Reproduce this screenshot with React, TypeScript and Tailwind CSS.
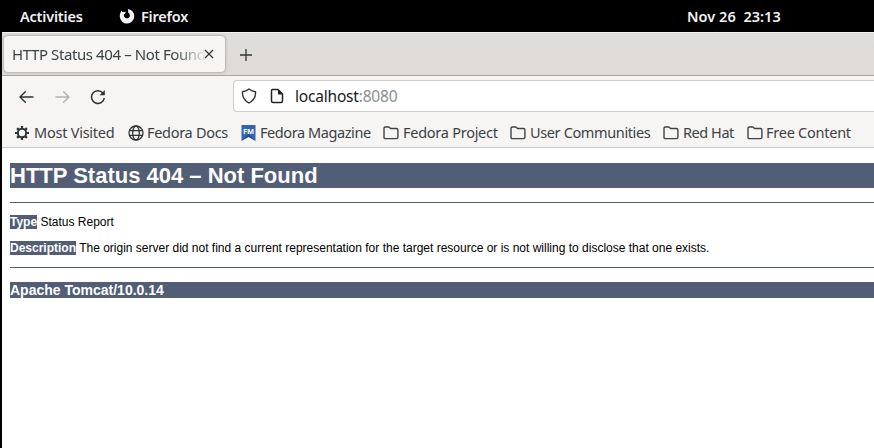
import type { ReactNode } from "react";

function Folder() {
  return (
    <svg className="h-4 w-4 shrink-0" viewBox="0 0 16 16" fill="none" stroke="#3c4446" strokeWidth="1.4" strokeLinejoin="round">
      <path d="M1 12.2V3.3Q1 2 2.3 2h3.2q.6 0 1 .5l1 1h6q1.4 0 1.4 1.4v7.3q0 1.4-1.4 1.4H2.4Q1 13.6 1 12.2Z" />
    </svg>
  );
}

function Gear() {
  return (
    <svg className="h-4 w-4 shrink-0" viewBox="0 0 16 16" fill="none" stroke="#2e3436">
      <circle cx="8" cy="8" r="4.2" strokeWidth="2" />
      <path strokeWidth="2.2" d="M8 1v3M8 12v3M1 8h3M12 8h3M3.1 3.1l2 2M10.9 10.9l2 2M12.9 3.1l-2 2M5.1 10.9l-2 2" />
    </svg>
  );
}

function Globe() {
  return (
    <svg className="h-4 w-4 shrink-0" viewBox="0 0 16 16" fill="none" stroke="#2e3436" strokeWidth="1.3">
      <circle cx="8" cy="8" r="7" />
      <ellipse cx="8" cy="8" rx="3.3" ry="7" />
      <path d="M1.7 5.6h12.6M1.7 10.4h12.6" />
    </svg>
  );
}

function Magazine() {
  return (
    <div className="relative h-4 w-[15px] shrink-0">
      <svg className="block h-4 w-[15px]" viewBox="0 0 15 16">
        <path d="M.5 0h14v16L7.5 11 .5 16Z" fill="#3465b0" />
        <path d="M.5 16 7.5 9l7 7-7-4Z" fill="#254a85" />
      </svg>
      <span className="absolute inset-x-0 top-[2px] text-center text-[7.5px] font-bold leading-[8px] tracking-normal text-white">FM</span>
    </div>
  );
}

function Bookmark({ icon, label, className }: { icon: ReactNode; label: string; className: string }) {
  return (
    <div className={`flex shrink-0 items-center whitespace-nowrap ${className}`}>
      {icon}
      <span>{label}</span>
    </div>
  );
}

export default function App() {
  return (
    <div className="flex h-[448px] w-[874px] flex-col overflow-hidden bg-black font-['Noto_Sans','Open_Sans',sans-serif] text-[#3b4244]">
      <header className="flex h-8 shrink-0 items-center pb-px pl-5 text-[14.5px] font-semibold leading-5 text-[#f2f2f2]">
        <span className="w-[99px] tracking-[-0.2px]">Activities</span>
        <svg className="mr-[6px] h-4 w-4" viewBox="0 0 16 16">
          <path fill="#f2f2f2" d="M2.3 2.4 3.5 4 6.8 3.8 6 5.7 4.8 6.6Q4.7 9.7 7.4 10.3 10.8 10.5 10.9 7.5 10.9 5.5 9.2 4.5L9 1q6.2 1.4 6.2 7.2A7.2 7.2 0 0 1 .8 8.6Q.7 5.7 1.7 4.2Z" />
        </svg>
        <span className="w-[546px] tracking-[-0.2px]">Firefox</span>
        <span className="whitespace-pre tracking-[0.05px]">Nov 26  23:13</span>
      </header>
      <div className="ml-[2px] flex min-h-0 flex-1 flex-col bg-white">
        <div className="flex h-11 shrink-0 items-center border-b border-t border-b-[#aaa5a1] border-t-[#f3f2f1] bg-linear-to-b from-[#dfdedc] to-[#dedad7]">
          <div className="ml-[2px] flex h-9 w-[221px] items-center rounded-[4px] bg-[#f6f5f4] pl-2 shadow-[0_0_3px_#8a8580]">
            <span className="w-[193px] overflow-hidden whitespace-nowrap text-[15px] tracking-[-0.4px] [mask-image:linear-gradient(to_right,#000_84%,transparent_101%)]">HTTP Status 404 – Not Found</span>
            <svg className="-ml-px h-[10px] w-[10px]" viewBox="0 0 10 10" stroke="#2e3436" strokeWidth="1.2"><path d="m1 1 8 8M9 1 1 9" /></svg>
          </div>
          <svg className="ml-[15px] mt-px h-3 w-3" viewBox="0 0 12 12" stroke="#2e3436" strokeWidth="1.3"><path d="M6 0v12M0 6h12" /></svg>
        </div>
        <div className="flex h-[72px] shrink-0 flex-col border-b border-[#ccc9c7] bg-[#f6f5f4] pt-1">
          <div className="flex h-8 items-center">
            <svg className="ml-[17px] mt-px h-4 w-[15px]" viewBox="0 0 15 16" fill="none" stroke="#2e3436" strokeWidth="1.4" strokeLinecap="round" strokeLinejoin="round"><path d="M14 8H1m5.3-5.3L1 8l5.3 5.3" /></svg>
            <svg className="ml-[21px] mt-px h-4 w-[15px]" viewBox="0 0 15 16" fill="none" stroke="#b2b3b2" strokeWidth="1.4" strokeLinecap="round" strokeLinejoin="round"><path d="M1 8h13M8.7 2.7 14 8l-5.3 5.3" /></svg>
            <svg className="ml-5 mt-px h-4 w-4" viewBox="0 0 16 16" fill="none" stroke="#2e3436" strokeWidth="1.5"><path d="M12.9 4A6.4 6.4 0 1 0 14.3 9" /><path d="M14.8 1v5.2H9.5Z" fill="#2e3436" stroke="none" /></svg>
            <div className="ml-[127px] flex h-8 flex-1 items-center rounded-l-[4px] border border-r-0 border-[#d0ccc9] bg-white text-[15.5px]">
              <svg className="ml-[7px] h-4 w-4" viewBox="0 0 16 16" fill="none" stroke="#2e3436" strokeWidth="1.4" strokeLinejoin="round"><path d="M8 1Q11 3.2 14.5 3.8 15.1 11 8 15 .9 11 1.5 3.8 5 3.2 8 1Z" /></svg>
              <svg className="ml-3 h-4 w-4" viewBox="0 0 16 16" fill="none" stroke="#202426" strokeWidth="1.5"><path d="M3.5 1.5H9L13.5 6v7q0 1.5-1.5 1.5H4Q2.5 14.5 2.5 13V3Q2.5 1.5 3.5 1.5Z" /><path d="M9 1v5.5h5Z" fill="#202426" stroke="none" /></svg>
              <span className="ml-[10px] pt-[2px] tracking-[-0.2px] text-[#181b1c]">localhost<span className="text-[#8a8d8e]">:8080</span></span>
            </div>
          </div>
          <nav className="mt-[3px] flex h-8 items-center pl-3 pt-[3px] text-[14.5px]">
            <Bookmark icon={<Gear />} label="Most Visited" className="w-[114px] gap-1 tracking-[-0.24px]" />
            <Bookmark icon={<Globe />} label="Fedora Docs" className="w-[113px] gap-[3px] tracking-[-0.3px]" />
            <Bookmark icon={<Magazine />} label="Fedora Magazine" className="w-[142px] gap-1 tracking-[-0.42px]" />
            <Bookmark icon={<Folder />} label="Fedora Project" className="w-[127px] gap-1 tracking-[-0.26px]" />
            <Bookmark icon={<Folder />} label="User Communities" className="w-[153px] gap-1 tracking-[-0.37px]" />
            <Bookmark icon={<Folder />} label="Red Hat" className="w-[84px] gap-1 tracking-[-0.45px]" />
            <Bookmark icon={<Folder />} label="Free Content" className="w-[110px] gap-[3px] tracking-[-0.25px]" />
          </nav>
        </div>
        <main className="pl-2 pt-[15px] font-['Liberation_Sans',Arial,sans-serif] text-[12px] text-black">
          <h1 className="h-[25px] bg-[#525d76] text-[22px] font-bold leading-[25px] text-white">HTTP Status 404 – Not Found</h1>
          <hr className="mt-[14px] h-px border-0 bg-[#525d76]" />
          <p className="mt-[12px] h-[14px] leading-[14px]"><b className="inline-block bg-[#525d76] text-white">Type</b> Status Report</p>
          <p className="mt-[12px] h-[14px] leading-[14px]"><b className="inline-block bg-[#525d76] text-white">Description</b> The origin server did not find a current representation for the target resource or is not willing to disclose that one exists.</p>
          <hr className="mt-[12px] h-px border-0 bg-[#525d76]" />
          <h3 className="mt-[14px] h-4 bg-[#525d76] text-[14px] font-bold leading-4 text-white">Apache Tomcat/10.0.14</h3>
        </main>
      </div>
    </div>
  );
}
